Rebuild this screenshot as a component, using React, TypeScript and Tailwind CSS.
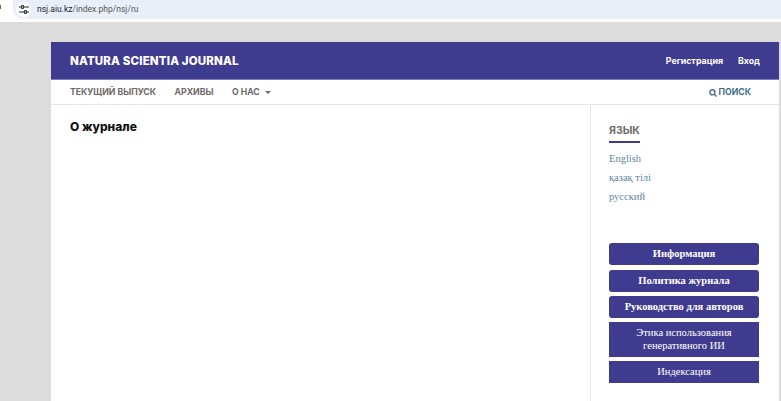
const sans = "font-['Inter','Liberation_Sans',sans-serif]";
const serif = "font-['Liberation_Serif',serif]";

const buttons = [
  { label: "Информация", cls: "rounded-[3px] h-[22px] mb-px font-bold" },
  { label: "Политика журнала", cls: "rounded-[3px] h-[22px] font-bold" },
  { label: "Руководство для авторов", cls: "rounded-[3px] h-[22px] font-bold" },
  { label: "Этика использования\nгенеративного ИИ", cls: "h-[35px] font-normal" },
  { label: "Индексация", cls: "h-[22px] font-normal" },
];

function SlidersIcon() {
  return (
    <svg width="10" height="9" viewBox="0 0 10 9" fill="none" stroke="#222" strokeWidth="1.2">
      <path d="M0 2h1.6M5.4 2H10M0 7h4.6M8.4 7H10" />
      <circle cx="3.5" cy="2" r="1.4" />
      <circle cx="6.5" cy="7" r="1.4" />
    </svg>
  );
}

function SearchIcon() {
  return (
    <svg width="8" height="8" viewBox="0 0 10 10" fill="none" stroke="#3f6f88" strokeWidth="1.7">
      <circle cx="4.2" cy="4.2" r="3.2" />
      <path d="M6.6 6.6L9.4 9.4" />
    </svg>
  );
}

export default function App() {
  return (
    <div className={`flex h-[401px] w-[781px] flex-col overflow-hidden bg-[#dcdcdc] ${sans}`}>
      {/* browser address bar */}
      <div className="flex h-[22px] shrink-0 bg-white pb-[3px]">
        <span className="mt-[5px] h-[4px] w-px bg-[#666]" />
        <div className="ml-[12px] flex h-[19px] flex-1 items-center rounded-bl-[10px] bg-[#e9eff9] pl-[3px]">
          <span className="flex size-[15px] items-center justify-center rounded-full bg-white">
            <SlidersIcon />
          </span>
          <span className="ml-[6px] font-['Roboto',sans-serif] text-[8.5px] text-[#555]">
            <span className="text-[#222]">nsj.aiu.kz</span>/index.php/nsj/ru
          </span>
        </div>
      </div>

      {/* page */}
      <div className="ml-[51px] mt-[20px] flex w-[728px] flex-1 flex-col bg-white">
        <header className="flex h-[38px] shrink-0 items-center justify-between border-b border-[#7f7cc0] bg-[#3f3b8f] px-[19px] text-white">
          <span className="mt-[3px] text-[11.5px] font-extrabold tracking-[0.15px]">NATURA SCIENTIA JOURNAL</span>
          <div className="mt-px flex gap-[15px] text-[8.8px] font-bold">
            <span>Регистрация</span>
            <span>Вход</span>
          </div>
        </header>

        <nav className="flex h-[25px] shrink-0 items-center justify-between border-b border-[#e6e6e6] pl-[19px] pr-[28px] pt-[2px] text-[8.7px] font-bold text-[#6f6a68]">
          <div className="flex items-center gap-[18.5px]">
            <span>ТЕКУЩИЙ ВЫПУСК</span>
            <span>АРХИВЫ</span>
            <span className="flex items-center gap-[5px]">
              О НАС
              <span className="h-0 w-0 border-x-[3px] border-t-[3px] border-x-transparent border-t-[#6f6a68]" />
            </span>
          </div>
          <span className="flex items-center gap-[2px] text-[#3f6f88]">
            <SearchIcon />
            ПОИСК
          </span>
        </nav>

        <div className="flex flex-1">
          <main className="w-[540px] border-r border-[#e6e6e6] pl-[19px] pt-[15px]">
            <h1 className="text-[12px] font-extrabold leading-[14px] text-[#111]">О журнале</h1>
          </main>

          <aside className="flex-1 pl-[18px] pt-[19px]">
            <h2 className="w-fit border-b-2 border-[#3f3b8f] pb-[4px] text-[10.5px] font-bold leading-[13px] text-[#6f6a68]">
              ЯЗЫК
            </h2>
            <ul className={`mt-[9px] flex flex-col gap-[5px] text-[10.5px] leading-[14px] text-[#5b87a0] ${serif}`}>
              <li>English</li>
              <li>қазақ тілі</li>
              <li>русский</li>
            </ul>
            <div className={`mt-[39px] flex w-[150px] flex-col gap-[4px] ${serif}`}>
              {buttons.map((b) => (
                <div
                  key={b.label}
                  className={`flex items-center justify-center whitespace-pre-line bg-[#3f3b8f] text-center text-[10.5px] leading-[12.5px] text-white ${b.cls}`}
                >
                  {b.label}
                </div>
              ))}
            </div>
          </aside>
        </div>
      </div>
    </div>
  );
}
